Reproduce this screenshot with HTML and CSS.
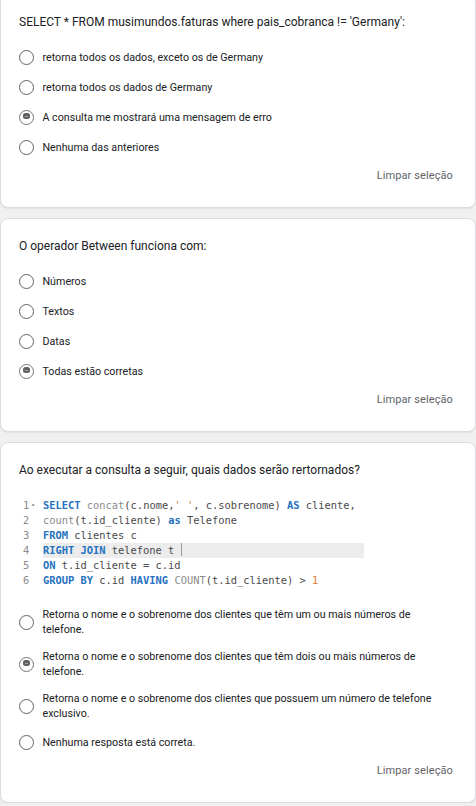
FILE: index.html
```html
<!DOCTYPE html>
<html lang="pt-BR">
<head>
<meta charset="utf-8">
<title>Formulário</title>
<link rel="stylesheet" href="styles.css">
</head>
<body>
<main class="page">
  <section class="card card-first">
    <div class="q-title">SELECT * FROM musimundos.faturas where pais_cobranca != 'Germany':</div>
    <div class="options">
      <div class="opt"><span class="radio"></span><span class="opt-text">retorna todos os dados, exceto os de Germany</span></div>
      <div class="opt"><span class="radio"></span><span class="opt-text">retorna todos os dados de Germany</span></div>
      <div class="opt"><span class="radio radio-on"></span><span class="opt-text">A consulta me mostrará uma mensagem de erro</span></div>
      <div class="opt"><span class="radio"></span><span class="opt-text">Nenhuma das anteriores</span></div>
    </div>
    <div class="clear-row"><span class="clear">Limpar seleção</span></div>
  </section>

  <section class="card">
    <div class="q-title">O operador Between funciona com:</div>
    <div class="options">
      <div class="opt"><span class="radio"></span><span class="opt-text">Números</span></div>
      <div class="opt"><span class="radio"></span><span class="opt-text">Textos</span></div>
      <div class="opt"><span class="radio"></span><span class="opt-text">Datas</span></div>
      <div class="opt"><span class="radio radio-on"></span><span class="opt-text">Todas estão corretas</span></div>
    </div>
    <div class="clear-row"><span class="clear">Limpar seleção</span></div>
  </section>

  <section class="card">
    <div class="q-title">Ao executar a consulta a seguir, quais dados serão rertornados?</div>
    <div class="code">
      <div class="cl"><span class="gut">1<span class="fold">·</span></span><span class="src"><span class="kw">SELECT</span> <span class="fn">concat</span>(c.nome,<span class="str">' '</span>, c.sobrenome) <span class="kw">AS</span> cliente,</span></div>
      <div class="cl"><span class="gut">2</span><span class="src"><span class="fn">count</span>(t.id_cliente) <span class="kw">as</span> Telefone</span></div>
      <div class="cl"><span class="gut">3</span><span class="src"><span class="kw">FROM</span> clientes c</span></div>
      <div class="cl"><span class="gut">4</span><span class="src src-active"><span class="kw">RIGHT JOIN</span> telefone t <span class="cursor"></span></span></div>
      <div class="cl"><span class="gut">5</span><span class="src"><span class="kw">ON</span> t.id_cliente = c.id</span></div>
      <div class="cl"><span class="gut">6</span><span class="src"><span class="kw">GROUP BY</span> c.id <span class="kw">HAVING</span> <span class="fn">COUNT</span>(t.id_cliente) &gt; <span class="num">1</span></span></div>
    </div>
    <div class="options options-long">
      <div class="opt opt-two"><span class="radio"></span><span class="opt-text">Retorna o nome e o sobrenome dos clientes que têm um ou mais números de telefone.</span></div>
      <div class="opt opt-two"><span class="radio radio-on"></span><span class="opt-text">Retorna o nome e o sobrenome dos clientes que têm dois ou mais números de telefone.</span></div>
      <div class="opt opt-two"><span class="radio"></span><span class="opt-text">Retorna o nome e o sobrenome dos clientes que possuem um número de telefone exclusivo.</span></div>
      <div class="opt"><span class="radio"></span><span class="opt-text">Nenhuma resposta está correta.</span></div>
    </div>
    <div class="clear-row"><span class="clear">Limpar seleção</span></div>
  </section>
</main>
</body>
</html>
```

FILE: styles.css
```css
* { box-sizing: border-box; }

html, body {
  margin: 0;
  padding: 0;
  background: #f0f0f0;
}

body {
  font-family: Roboto, "Liberation Sans", Arial, sans-serif;
  color: #202124;
  overflow: hidden;
}

.page {
  display: flex;
  flex-direction: column;
  gap: 10px;
}

.card {
  background: #fff;
  border: 1px solid #dadce0;
  border-radius: 8px;
  box-shadow: 0 1px 1px rgba(0, 0, 0, 0.06);
  padding: 17px 22px 21px 17px;
}

.card-first {
  margin-top: -6px;
}

.q-title {
  font-size: 12px;
  line-height: 20px;
  letter-spacing: 0;
  color: #202124;
  padding-left: 1px;
}

.options {
  display: flex;
  flex-direction: column;
  margin-top: 10px;
}

.opt {
  display: flex;
  align-items: center;
  min-height: 30px;
}

.opt-text {
  font-size: 10.7px;
  line-height: 15px;
  color: #202124;
  padding-left: 8.5px;
  padding-right: 8px;
}

.radio {
  flex: none;
  position: relative;
  width: 15px;
  height: 15px;
  margin-left: 1px;
  border: 1.5px solid #5f6368;
  border-radius: 50%;
}

.radio-on {
  border-color: #757575;
}

.radio-on::after {
  content: "";
  position: absolute;
  left: 2.6px;
  top: 2.8px;
  width: 7px;
  height: 6.2px;
  border-radius: 2.5px;
  background: #616161;
}

.radio-on::before {
  content: "";
  position: absolute;
  left: 4.5px;
  top: 5.2px;
  width: 3.2px;
  height: 1.5px;
  background: #a8a8a8;
  z-index: 1;
  border-radius: 1px;
}

.clear-row {
  display: flex;
  justify-content: flex-end;
  margin-top: 4px;
}

.clear {
  font-size: 11px;
  line-height: 20px;
  color: #5f6368;
  letter-spacing: 0.1px;
}

/* code block */
.code {
  margin-top: 18px;
  font-family: "DejaVu Sans Mono", "Liberation Mono", monospace;
  font-size: 10.4px;
  line-height: 15px;
  color: #4a4a4a;
}

.cl {
  display: flex;
  height: 15px;
}

.gut {
  flex: none;
  width: 25px;
  padding-left: 5px;
  color: #8a8a8a;
  position: relative;
}

.fold {
  position: absolute;
  left: 12px;
  top: 0;
  color: #8a8a8a;
  font-weight: bold;
}

.src {
  flex: none;
  width: 321px;
  white-space: pre;
}

.src-active {
  background: #ececec;
}

.kw {
  color: #2572c0;
  font-weight: bold;
}

.fn {
  color: #8c8c8c;
}

.str {
  color: #e0884a;
}

.num {
  color: #e0803a;
}

.cursor {
  display: inline-block;
  width: 1px;
  height: 13px;
  vertical-align: -2px;
  background: #9a9a9a;
}

.options-long {
  margin-top: 13px;
}

.opt-two {
  padding: 6px 0;
}
```
